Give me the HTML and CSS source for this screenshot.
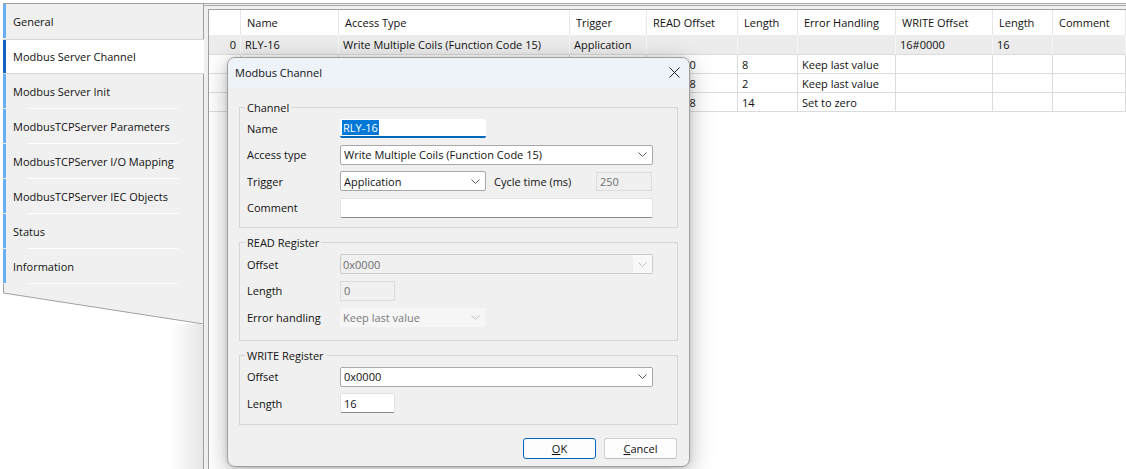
FILE: index.html
```html
<!DOCTYPE html>
<html>
<head>
<meta charset="utf-8">
<link rel="stylesheet" href="styles.css">
</head>
<body>
<div class="app">
  <aside class="sidebar">
    <div class="tabs">
      <div class="tab">General</div>
      <div class="tab active">Modbus Server Channel</div>
      <div class="tab sep">Modbus Server Init</div>
      <div class="tab sep">ModbusTCPServer Parameters</div>
      <div class="tab sep">ModbusTCPServer I/O Mapping</div>
      <div class="tab sep">ModbusTCPServer IEC Objects</div>
      <div class="tab sep">Status</div>
      <div class="tab sep">Information</div>
    </div>
    <svg class="curl" width="201" height="40" viewBox="0 0 201 40">
      <polygon points="0,0 201,0 201,40 0,9" fill="#f0f0f0"/>
      <path d="M0.5 0 V9 L200.5 40" stroke="#a0a0a0" fill="none"/>
      <path d="M200.5 0 V40" stroke="#a0a0a0" fill="none"/>
    </svg>
    <div class="sidebar-rest"></div>
  </aside>
  <main class="main">
    <div class="grid">
      <div class="row head">
        <div></div><div>Name</div><div>Access Type</div><div>Trigger</div><div>READ Offset</div><div>Length</div><div>Error Handling</div><div>WRITE Offset</div><div>Length</div><div>Comment</div>
      </div>
      <div class="row sel">
        <div class="num">0</div><div>RLY-16</div><div>Write Multiple Coils (Function Code 15)</div><div>Application</div><div></div><div></div><div></div><div>16#0000</div><div>16</div><div></div>
      </div>
      <div class="row">
        <div class="num"></div><div></div><div></div><div></div><div class="ro">16#0000</div><div>8</div><div>Keep last value</div><div></div><div></div><div></div>
      </div>
      <div class="row">
        <div class="num"></div><div></div><div></div><div></div><div class="ro">16#0008</div><div>2</div><div>Keep last value</div><div></div><div></div><div></div>
      </div>
      <div class="row">
        <div class="num"></div><div></div><div></div><div></div><div class="ro">16#0008</div><div>14</div><div>Set to zero</div><div></div><div></div><div></div>
      </div>
    </div>
  </main>
</div>

<div class="dialog">
  <div class="titlebar">
    <span>Modbus Channel</span>
    <svg class="close" width="11" height="11" viewBox="0 0 11 11"><path d="M0.5 0.5 L10.5 10.5 M10.5 0.5 L0.5 10.5" stroke="#1f1f1f" stroke-width="1" fill="none"/></svg>
  </div>
  <div class="dlg-body">
    <fieldset class="grp g1">
      <legend>Channel</legend>
      <div class="frow">
        <span class="lbl">Name</span>
        <div class="ctl w-med edit focus"><span class="hl">RLY-16</span></div>
      </div>
      <div class="frow">
        <span class="lbl">Access type</span>
        <div class="ctl w-big combo"><span>Write Multiple Coils (Function Code 15)</span><svg width="9" height="5" viewBox="0 0 9 5"><path d="M0.5 0.5 L4.5 4.5 L8.5 0.5" stroke="#5a5a5a" fill="none"/></svg></div>
      </div>
      <div class="frow">
        <span class="lbl">Trigger</span>
        <div class="ctl w-med combo"><span>Application</span><svg width="9" height="5" viewBox="0 0 9 5"><path d="M0.5 0.5 L4.5 4.5 L8.5 0.5" stroke="#5a5a5a" fill="none"/></svg></div>
        <span class="lbl2">Cycle time (ms)</span>
        <div class="ctl w-cyc dis-edit"><span>250</span></div>
      </div>
      <div class="frow">
        <span class="lbl">Comment</span>
        <div class="ctl w-big edit"></div>
      </div>
    </fieldset>

    <fieldset class="grp g2">
      <legend>READ Register</legend>
      <div class="frow">
        <span class="lbl">Offset</span>
        <div class="ctl w-big dis-combo"><span>0x0000</span><i class="chev-area"><svg width="9" height="5" viewBox="0 0 9 5"><path d="M0.5 0.5 L4.5 4.5 L8.5 0.5" stroke="#c2c2c2" fill="none"/></svg></i></div>
      </div>
      <div class="frow">
        <span class="lbl">Length</span>
        <div class="ctl w-sm dis-edit"><span>0</span></div>
      </div>
      <div class="frow">
        <span class="lbl">Error handling</span>
        <div class="ctl w-err dis-flat"><span>Keep last value</span><svg width="9" height="5" viewBox="0 0 9 5"><path d="M0.5 0.5 L4.5 4.5 L8.5 0.5" stroke="#c2c2c2" fill="none"/></svg></div>
      </div>
    </fieldset>

    <fieldset class="grp g3">
      <legend>WRITE Register</legend>
      <div class="frow">
        <span class="lbl">Offset</span>
        <div class="ctl w-big combo"><span>0x0000</span><svg width="9" height="5" viewBox="0 0 9 5"><path d="M0.5 0.5 L4.5 4.5 L8.5 0.5" stroke="#5a5a5a" fill="none"/></svg></div>
      </div>
      <div class="frow">
        <span class="lbl">Length</span>
        <div class="ctl w-sm edit"><span>16</span></div>
      </div>
    </fieldset>

    <div class="btns">
      <div class="btn default"><u>O</u>K</div>
      <div class="btn"><u>C</u>ancel</div>
    </div>
  </div>
</div>
</body>
</html>
```

FILE: styles.css
```css
* { box-sizing: border-box; }

body {
  margin: 0;
  width: 1126px;
  height: 469px;
  overflow: hidden;
  position: relative;
  background: #fff;
  color: #111;
  font-family: "Open Sans", "Noto Sans", "Liberation Sans", sans-serif;
  font-size: 11px;
}

.app {
  display: flex;
  height: 469px;
}

/* ---------- sidebar ---------- */
.sidebar {
  width: 204px;
  flex: none;
  display: flex;
  flex-direction: column;
  padding-top: 3px;
}

.tabs {
  margin-left: 3px;
  background: #f0f0f0;
  border-top: 1px solid #a0a0a0;
  border-right: 1px solid #a0a0a0;
}

.tab {
  height: 35px;
  display: flex;
  align-items: center;
  padding-left: 10px;
  white-space: nowrap;
  background: linear-gradient(#6aaef0, #6aaef0) left top / 3px 34px no-repeat;
}

.tab.sep {
  background:
    linear-gradient(#6aaef0, #6aaef0) left top / 3px 34px no-repeat,
    linear-gradient(#fdfdfd, #fdfdfd) 25px bottom / 150px 1px no-repeat;
}

.tab.active {
  margin-right: -1px;
  border-top: 1px solid #d6d6d6;
  border-bottom: 1px solid #d6d6d6;
  background: #fff linear-gradient(#1565c0, #1565c0) left top / 3px 100% no-repeat;
}

.curl {
  display: block;
  margin-left: 3px;
  flex: none;
}

.sidebar-rest {
  flex: 1;
  border-right: 1px solid #a0a0a0;
  background: linear-gradient(to right, #fff 170px, #e6e6e6 203px);
}

/* ---------- main grid ---------- */
.main {
  flex: 1;
  margin-top: 3px;
  border-top: 3px double #a8a8a8;
  background: #f0f0f0;
  padding: 3px 0 0 4px;
  display: flex;
  flex-direction: column;
}

.grid {
  flex: 1;
  background: #fff;
  border-top: 1px solid #a0a0a0;
  border-left: 1px solid #a0a0a0;
}

.row {
  display: grid;
  grid-template-columns: 32px 98px 231px 77px 91px 60px 98px 97px 60px 73px;
  height: 19px;
}

.row > div {
  border-right: 1px solid #dcdcdc;
  border-bottom: 1px solid #dcdcdc;
  padding: 0 4px;
  display: flex;
  align-items: center;
  white-space: nowrap;
  overflow: hidden;
}

.row > div.num {
  justify-content: flex-end;
}

.row.head {
  height: 25px;
}

.row.head > div {
  border-bottom: none;
  border-right-color: #e6e6e6;
  padding-left: 6px;
}

.row.sel {
  height: 20px;
  background: #ececec;
}

.row.sel > div {
  border-right-color: #f6f6f6;
}

/* ---------- dialog ---------- */
.dialog {
  position: absolute;
  left: 227px;
  top: 57px;
  width: 463px;
  height: 410px;
  background: #f0f0f0;
  border: 1px solid #9e9e9e;
  border-radius: 8px;
  overflow: hidden;
  box-shadow: 0 6px 24px rgba(0, 0, 0, 0.28), 0 0 5px rgba(0, 0, 0, 0.12);
}

.titlebar {
  height: 29px;
  background: #eef3fa;
  display: flex;
  align-items: center;
  justify-content: space-between;
  padding: 0 9px 0 7px;
}

.close { display: block; }

.dlg-body {
  padding: 13px 11px 0 11px;
}

.grp {
  margin: 0;
  padding: 0 10px 6px 7px;
  border: 1px solid #d6d6d6;
  min-inline-size: 0;
}

.grp legend {
  padding: 0 2px;
  margin-left: -2px;
  line-height: 15px;
}

.g2, .g3 { margin-top: 7px; }
.g2 { padding-top: 1px; padding-bottom: 9px; }
.g3 { padding-top: 1px; padding-bottom: 7px; }

.frow {
  height: 26.5px;
  display: flex;
  align-items: center;
}

.lbl {
  width: 93px;
  flex: none;
}

.lbl2 {
  width: 102px;
  margin-left: 8px;
  flex: none;
}

.ctl {
  height: 20px;
  display: flex;
  align-items: center;
  justify-content: space-between;
  padding: 0 5px 0 3px;
  white-space: nowrap;
  flex: none;
}

.w-big { width: 313px; }
.w-med { width: 146px; }
.w-sm  { width: 55px; }
.w-cyc { width: 56px; height: 19px; }
.w-err { width: 145px; height: 19px; }

.combo {
  background: #fff;
  border: 1px solid #a8a8a8;
  border-radius: 2px;
}

.edit {
  background: #fff;
  border: 1px solid #e3e3e3;
  border-bottom-color: #8a8a8a;
  border-radius: 2px;
}

.edit.focus {
  height: 19px;
  border: none;
  border-bottom: 2px solid #0067c0;
  padding-left: 2px;
}

.hl {
  background: #0078d7;
  color: #fff;
  line-height: 15px;
  padding: 0 1px;
}

.dis-edit {
  background: #f0f0f0;
  border: 1px solid #dcdcdc;
  color: #6f6f6f;
  padding-left: 3px;
}

.dis-combo {
  background: #f0f0f0;
  border: 1px solid #cbcbcb;
  border-radius: 2px;
  color: #6f6f6f;
  padding: 0 0 0 2px;
}

.chev-area {
  height: 100%;
  width: 19px;
  background: #f8f8f8;
  display: flex;
  align-items: center;
  justify-content: center;
}

.dis-flat {
  background: #f6f6f6;
  color: #7a7a7a;
}

.btns {
  display: flex;
  justify-content: flex-end;
  gap: 8px;
  margin-top: 13px;
  padding-right: 1px;
}

.btn {
  width: 73px;
  height: 21px;
  display: flex;
  align-items: center;
  justify-content: center;
  background: #fdfdfd;
  border: 1px solid #d0d0d0;
  border-bottom-color: #bdbdbd;
  border-radius: 3px;
}

.btn.default {
  border: 1px solid #0067c0;
}
```
